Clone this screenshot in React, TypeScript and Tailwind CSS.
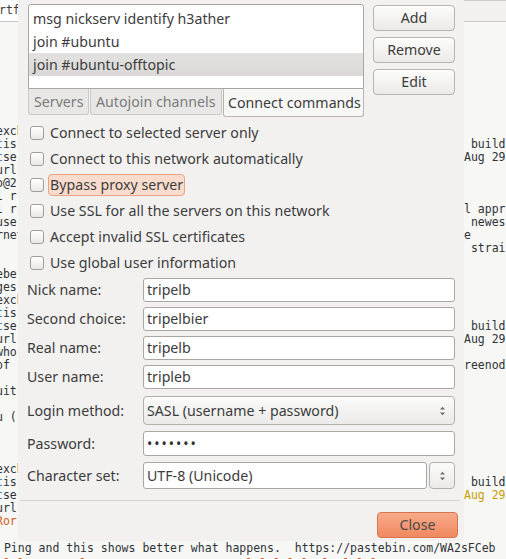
import React from "react";

type Seg = { t: string; k?: "d" | "b" | "o" | "y" };
type Line = { l?: Seg[]; r?: Seg[]; full?: Seg[] };

const colorCls: Record<string, string> = {
  d: "text-[#2e3436]",
  b: "text-[#4a7fc9]",
  o: "text-[#d0601a]",
  y: "text-[#c4a000]",
};

const lines: Line[] = [
  { l: [{ t: "exch" }] },
  { l: [{ t: "t", k: "b" }, { t: "is" }], r: [{ t: " build" }] },
  { l: [{ t: "t", k: "b" }, { t: "se" }], r: [{ t: "Aug 29" }] },
  { l: [{ t: "url" }, { t: ":", k: "b" }] },
  { l: [{ t: "o@2" }] },
  { l: [{ t: "l r" }] },
  { l: [{ t: "l r" }], r: [{ t: "l appr" }] },
  { l: [{ t: "use" }], r: [{ t: " newest" }] },
  { l: [{ t: "rnet" }], r: [{ t: "e" }] },
  { r: [{ t: " strai" }] },
  {},
  { l: [{ t: "ebe" }] },
  { l: [{ t: "ges" }] },
  { l: [{ t: "exch" }] },
  { l: [{ t: "t", k: "b" }, { t: "is" }] },
  { l: [{ t: "t", k: "b" }, { t: "se" }], r: [{ t: " build" }] },
  { l: [{ t: "url" }, { t: ":", k: "b" }], r: [{ t: "Aug 29" }] },
  { l: [{ t: "who" }] },
  { l: [{ t: "of" }], r: [{ t: "reenode" }] },
  {},
  { l: [{ t: "uit" }] },
  {},
  { l: [{ t: "u (" }] },
  {},
  {},
  {},
  { l: [{ t: "exch" }] },
  { l: [{ t: "t", k: "b" }, { t: "is" }], r: [{ t: " build" }] },
  { l: [{ t: "t", k: "b" }, { t: "se" }], r: [{ t: "Aug 29", k: "y" }] },
  { l: [{ t: "url" }, { t: ":", k: "b" }] },
  { l: [{ t: "Ror", k: "o" }] },
  {},
  { full: [{ t: " Ping and this shows better what happens.  https://pastebin.com/WA2sFCeb" }] },
  { full: [{ t: " l l  2022  l 140.91.174.95.157.20  l l l l l  l  l l l", k: "o" }] },
];

function Segs({ segs }: { segs?: Seg[] }) {
  if (!segs) return null;
  return (
    <>
      {segs.map((s, i) => (
        <span key={i} className={colorCls[s.k ?? "d"]}>
          {s.t}
        </span>
      ))}
    </>
  );
}

function Check() {
  return (
    <span className="w-[14px] h-[14px] rounded-[3px] border border-[#a09d98] bg-linear-to-b from-white to-[#e9e8e6] shrink-0" />
  );
}

function UpDown() {
  return (
    <svg width="7" height="12" viewBox="0 0 7 12">
      <path d="M1 4.5 L3.5 1.8 L6 4.5Z" fill="#6a6a6a" />
      <path d="M1 7.5 L3.5 10.2 L6 7.5Z" fill="#6a6a6a" />
    </svg>
  );
}

const checks = [
  "Connect to selected server only",
  "Connect to this network automatically",
  "Bypass proxy server",
  "Use SSL for all the servers on this network",
  "Accept invalid SSL certificates",
  "Use global user information",
];

export default function App() {
  return (
    <div className="relative w-[506px] h-[559px] overflow-hidden bg-[#f7f7f6]">
      {/* background chat window */}
      <div className="flex flex-col font-['DejaVu_Sans_Mono',monospace] text-[11.5px]">
        <div className="h-[22px] flex border-b border-[#c9c6c1] bg-[#f2f1f0]">
          <div className="w-[200px] bg-white flex items-center overflow-hidden whitespace-pre text-[#3c3c3c]">
            <span className="-ml-[1px]">rtf</span>
          </div>
          <div className="flex-1 border-t border-[#cfccc8]" />
        </div>
        <div className="flex flex-col pt-[103px]">
          {lines.map((ln, i) =>
            ln.full ? (
              <div
                key={i}
                className={
                  i === lines.length - 1
                    ? "h-[13px] leading-[13px] whitespace-pre -ml-[3px] mt-[3px]"
                    : "h-[13px] leading-[13px] whitespace-pre -ml-[3px] mt-[1px]"
                }
              >
                <Segs segs={ln.full} />
              </div>
            ) : (
              <div key={i} className="h-[13px] leading-[13px] flex whitespace-pre">
                <div className="w-[18px] overflow-hidden shrink-0">
                  <div className="-ml-[4px]">
                    <Segs segs={ln.l} />
                  </div>
                </div>
                <div className="w-[446px] shrink-0" />
                <div className="flex-1 overflow-hidden">
                  <Segs segs={ln.r} />
                </div>
              </div>
            )
          )}
        </div>
      </div>

      {/* dialog window over the chat */}
      <div className="absolute left-[18px] top-0 w-[446px] h-[541px] bg-[#f2f1f0] flex flex-col font-['Noto_Sans',sans-serif] text-[14.2px] text-[#3c3c3c] whitespace-nowrap">
        {/* top: list + tabs, buttons */}
        <div className="flex pt-[4px] pl-[10px]">
          <div className="w-[336px] flex flex-col">
            <div className="h-[85px] border border-[#aaa7a2] rounded-t-[3px] bg-white pt-[2px]">
              <div className="h-[23px] leading-[23px] px-[4px]">msg nickserv identify h3ather</div>
              <div className="h-[23px] leading-[23px] px-[4px]">join #ubuntu</div>
              <div className="h-[23px] leading-[23px] px-[4px] bg-linear-to-b from-[#e2e1df] to-[#dad9d7]">
                join #ubuntu-offtopic
              </div>
            </div>
            <div className="flex items-start">
              <div className="h-[26px] w-[61px] flex items-center pl-[5px] bg-[#e8e7e5] border-x border-b border-[#cdcac6] rounded-b-[3px] text-[#7b7b7b]">
                Servers
              </div>
              <div className="h-[26px] w-[132px] ml-[1px] flex items-center pl-[5px] bg-[#e8e7e5] border-x border-b border-[#cdcac6] rounded-b-[3px] text-[#7b7b7b]">
                Autojoin channels
              </div>
              <div className="h-[28px] flex-1 ml-[1px] flex items-center pl-[4px] bg-[#f7f7f6] border-x border-b border-[#b8b5b0] rounded-b-[3px]">
                Connect commands
              </div>
            </div>
          </div>
          <div className="ml-[9px] w-[82px] pt-[1px] flex flex-col gap-[6px]">
            {["Add", "Remove", "Edit"].map((b) => (
              <div
                key={b}
                className="h-[26px] rounded-[4px] border border-[#b7b4af] bg-linear-to-b from-[#fcfcfb] to-[#ebeae8] flex items-center justify-center"
              >
                {b}
              </div>
            ))}
          </div>
        </div>

        {/* checkboxes */}
        <div className="flex flex-col mt-[3px] pl-[12px]">
          {checks.map((c, i) => (
            <div key={c} className="h-[26px] flex items-center">
              <Check />
              <span
                className={
                  i === 2
                    ? "ml-[4px] h-[22px] flex items-center px-[1px] rounded-[4px] border border-[#eba385] bg-[#f9dccd]"
                    : "ml-[4px] h-[22px] flex items-center px-[1px] border border-transparent"
                }
              >
                {c}
              </span>
            </div>
          ))}
        </div>

        {/* form */}
        <div className="flex flex-col mt-[2px] pl-[9px]">
          <div className="flex items-center h-[24px]">
            <span className="w-[116px]">Nick name:</span>
            <div className="w-[312px] h-full border border-[#aaa7a2] rounded-[3px] bg-white flex items-center pl-[3px]">tripelb</div>
          </div>
          <div className="flex items-center h-[24px] mt-[5px]">
            <span className="w-[116px]">Second choice:</span>
            <div className="w-[312px] h-full border border-[#aaa7a2] rounded-[3px] bg-white flex items-center pl-[3px]">tripelbier</div>
          </div>
          <div className="flex items-center h-[24px] mt-[5px]">
            <span className="w-[116px]">Real name:</span>
            <div className="w-[312px] h-full border border-[#aaa7a2] rounded-[3px] bg-white flex items-center pl-[3px]">tripelb</div>
          </div>
          <div className="flex items-center h-[24px] mt-[5px]">
            <span className="w-[116px]">User name:</span>
            <div className="w-[312px] h-full border border-[#aaa7a2] rounded-[3px] bg-white flex items-center pl-[3px]">tripleb</div>
          </div>
          <div className="flex items-center h-[29px] mt-[7px]">
            <span className="w-[116px]">Login method:</span>
            <div className="w-[312px] h-full border border-[#b3b0ab] rounded-[4px] bg-linear-to-b from-[#fbfbfa] to-[#ebeae8] flex items-center pl-[3px] pr-[8px] justify-between">
              <span>SASL (username + password)</span>
              <UpDown />
            </div>
          </div>
          <div className="flex items-center h-[25px] mt-[6px]">
            <span className="w-[116px]">Password:</span>
            <div className="w-[312px] h-full border border-[#aaa7a2] rounded-[3px] bg-white flex items-center pl-[3px] text-[14px] tracking-[2px] text-[#2e2e2e]">
              •••••••
            </div>
          </div>
          <div className="flex items-center h-[27px] mt-[6px]">
            <span className="w-[116px]">Character set:</span>
            <div className="w-[284px] h-full border border-[#aaa7a2] rounded-[3px] bg-white flex items-center pl-[3px]">UTF-8 (Unicode)</div>
            <div className="w-[26px] h-full ml-[2px] border border-[#b3b0ab] rounded-[4px] bg-linear-to-b from-[#fbfbfa] to-[#ebeae8] flex items-center justify-center">
              <UpDown />
            </div>
          </div>
        </div>

        {/* separator */}
        <div className="mt-[11px] ml-[2px] mr-[4px] h-[1px] bg-[#d6d3cf]" />

        {/* close */}
        <div className="mt-[11px] self-end mr-[6px] w-[81px] h-[26px] rounded-[4px] border border-[#d77550] bg-linear-to-b from-[#f8aa8a] to-[#f0885f] flex items-center justify-center text-[#4a4a4a]">
          Close
        </div>
      </div>
    </div>
  );
}
